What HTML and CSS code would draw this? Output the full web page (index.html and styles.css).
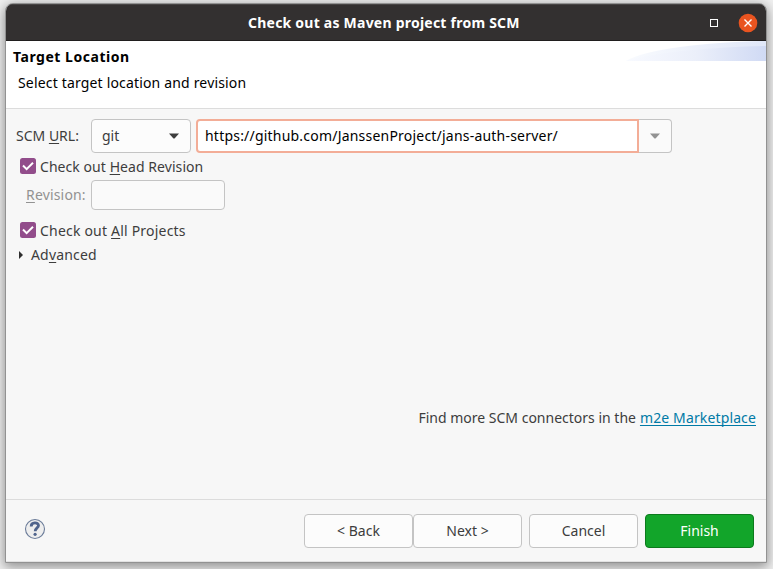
FILE: index.html
```
<!DOCTYPE html>
<html lang="en">
<head>
<meta charset="utf-8">
<title>Check out as Maven project from SCM</title>
<link rel="stylesheet" href="styles.css">
</head>
<body>
<div class="window">
  <div class="titlebar">
    <div class="title"><span class="t-title">Check out as Maven project from SCM</span></div>
    <svg class="maximize" width="10" height="10" viewBox="0 0 10 10"><rect x="1.5" y="1.5" width="7" height="7" fill="none" stroke="#fff"/></svg>
    <svg class="close" width="20" height="20" viewBox="0 0 20 20"><circle cx="10" cy="10" r="9.3" fill="#e95420"/><path d="M6.5 6.5l7 7M13.5 6.5l-7 7" stroke="#fff" stroke-width="1.4"/></svg>
  </div>
  <div class="header">
    <div class="headings">
      <div class="heading"><span class="t-heading">Target Location</span></div>
      <div class="sub"><span class="t-sub">Select target location and revision</span></div>
    </div>
    <svg class="swoosh" width="140" height="20" viewBox="0 0 140 20">
      <defs>
        <linearGradient id="back" x1="0" x2="1"><stop offset="0" stop-color="#f9fbfe"/><stop offset="1" stop-color="#e0e7f8"/></linearGradient>
        <linearGradient id="front" x1="0" x2="1"><stop offset="0" stop-color="#f8faff"/><stop offset=".5" stop-color="#ebeffa"/><stop offset="1" stop-color="#d0daf4"/></linearGradient>
      </defs>
      <path d="M0 20C20 8 80 1 140 0V20Z" fill="url(#back)"/>
      <path d="M0 20C30 11 90 6 140 5V20Z" fill="url(#front)"/>
    </svg>
  </div>
  <div class="content">
    <div class="row url-row">
      <label class="scm-label"><span class="t-scm">SCM <u>U</u>RL:</span></label>
      <div class="box select"><span class="t-git">git</span><svg width="10" height="6" viewBox="0 0 10 6"><path d="M0 .5h10L6 5Q5 6 4 5Z" fill="#3d3d3d"/></svg></div>
      <div class="url"><div class="entry"><span class="t-url">https://github.com/JanssenProject/jans-auth-server/</span></div><div class="drop"><svg width="10" height="6" viewBox="0 0 10 6"><path d="M0 .5h10L6 5Q5 6 4 5Z" fill="#929292"/></svg></div></div>
    </div>
    <div class="row check head-check">
      <svg width="16" height="16" viewBox="0 0 16 16"><rect width="16" height="16" rx="2.5" fill="#924d8b"/><path d="M3 7.5l3.6 3.6L13 4.8" fill="none" stroke="#fff" stroke-width="2"/></svg>
      <span class="t-head">Check out <u>H</u>ead Revision</span>
    </div>
    <div class="row revision">
      <label class="rev-label"><span class="t-rev"><u>R</u>evision:</span></label>
      <div class="box rev-input"></div>
    </div>
    <div class="row check all-check">
      <svg width="16" height="16" viewBox="0 0 16 16"><rect width="16" height="16" rx="2.5" fill="#924d8b"/><path d="M3 7.5l3.6 3.6L13 4.8" fill="none" stroke="#fff" stroke-width="2"/></svg>
      <span class="t-all">Check out <u>A</u>ll Projects</span>
    </div>
    <div class="row advanced">
      <svg width="4" height="8" viewBox="0 0 4 8"><path d="M0 0l4 4-4 4Z" fill="#2e2e2e"/></svg>
      <span class="t-adv">Ad<u>v</u>anced</span>
    </div>
    <div class="market"><span class="t-find">Find more SCM connectors in the</span><a class="t-link">m2e Marketplace</a></div>
  </div>
  <div class="footer">
    <svg class="help" width="22" height="22" viewBox="0 0 22 22"><circle cx="11" cy="11" r="9.5" fill="#eee" stroke="#6b7c99" stroke-width="1.1"/><path d="M7.2 8.4C7.2 3.8 14.5 3.9 14.5 7.5c0 2.5-3.3 2.4-3.3 5.8" fill="none" stroke="#50648c" stroke-width="2.8"/><circle cx="11.1" cy="16.3" r="1.6" fill="#50648c"/></svg>
    <div class="box btn"><span class="t-back">&lt; Back</span></div>
    <div class="box btn next"><span class="t-next">Next &gt;</span></div>
    <div class="box btn cancel"><span class="t-cancel">Cancel</span></div>
    <div class="box btn finish"><span class="t-finish">Finish</span></div>
  </div>
</div>
</body>
</html>
```
FILE: styles.css
```
* { box-sizing: border-box; }
body {
  margin: 0; width: 773px; height: 569px; overflow: hidden; padding: 3px 0 0 5px;
  background: #f0f0f0;
  font: 14px/20px "Noto Sans", "Open Sans", sans-serif; color: #3d3d3d;
}
svg { display: block; flex: none; }
span, a { white-space: nowrap; }
u { text-decoration: underline; text-underline-offset: 2px; text-decoration-thickness: 1px; text-decoration-skip-ink: none; }
.window {
  width: 762px; height: 560px; border: 1px solid #929292; border-radius: 8px 8px 0 0;
  background: #f7f7f7; overflow: hidden; display: flex; flex-direction: column;
  box-shadow: 0 3px 12px 1px rgba(0,0,0,.4);
}
.titlebar {
  height: 37px; flex: none; background: #333030; border-top: 1px solid #484545; border-bottom: 1px solid #201e1e;
  display: flex; align-items: center; padding-right: 8px;
}
.title { flex: 1; padding-left: 242px; color: #fff; font-weight: 700; }
.maximize { margin-right: 19px; }
.header { height: 68px; flex: none; background: #fff; border-bottom: 1px solid #dcdcdc; display: flex; justify-content: space-between; }
.headings { padding: 6px 0 0 7px; color: #000; }
.heading { font-weight: 700; }
.sub { padding: 6px 0 0 5px; }
.content { flex: none; height: 390px; padding-top: 10px; }
.row { display: flex; align-items: center; }
.box { border: 1px solid #c4c4c4; border-radius: 4px; background: #fcfcfc; }
.url-row { height: 34px; padding-left: 10px; }
.scm-label { width: 75px; }
.select { width: 100px; height: 34px; padding: 0 11px 0 10px; display: flex; align-items: center; justify-content: space-between; }
.url { display: flex; width: 476px; height: 34px; margin-left: 5px; }
.entry { width: 443px; border: 2px solid #f3ad97; border-radius: 4px 0 0 4px; background: #fff; color: #000; display: flex; align-items: center; padding-left: 7px; }
.drop { width: 33px; border: 1px solid #c4c4c4; border-left: 0; border-radius: 0 4px 4px 0; background: #fafafa; display: flex; align-items: center; justify-content: center; }
.check { height: 20px; padding-left: 14px; gap: 4px; }
.check span { padding-top: 2px; }
.head-check { margin-top: 3px; }
.revision { height: 30px; margin-top: 4px; padding-left: 20px; color: #929292; }
.rev-label { width: 65px; }
.rev-input { width: 134px; height: 30px; background: #fafafa; }
.all-check { margin-top: 10px; }
.advanced { height: 20px; margin-top: 5px; padding-left: 13px; gap: 8px; }
.market { display: flex; justify-content: flex-end; gap: 4px; padding-right: 10px; margin-top: 143px; }
.t-title { letter-spacing: .23px; }
.t-heading { letter-spacing: .53px; }
.t-sub { letter-spacing: .17px; }
.t-url { letter-spacing: .21px; }
.t-head { letter-spacing: .06px; }
.t-rev, .t-adv { letter-spacing: .17px; }
.t-all { letter-spacing: .2px; }
.t-link { letter-spacing: .13px; color: #007aa6; text-decoration: underline; text-underline-offset: 2px; text-decoration-thickness: 1px; text-decoration-skip-ink: none; }
.footer { flex: 1; border-top: 1px solid #dcdcdc; border-bottom: 1px solid #e2e2e2; display: flex; align-items: center; padding: 0 12px 0 18px; }
.help { margin-right: auto; margin-bottom: 4px; }
.btn { width: 109px; height: 34px; display: flex; align-items: center; justify-content: center; }
.cancel, .finish { margin-left: 7px; }
.finish { background: #12a52a; border-color: #0c7a1d; color: #fff; }
```
